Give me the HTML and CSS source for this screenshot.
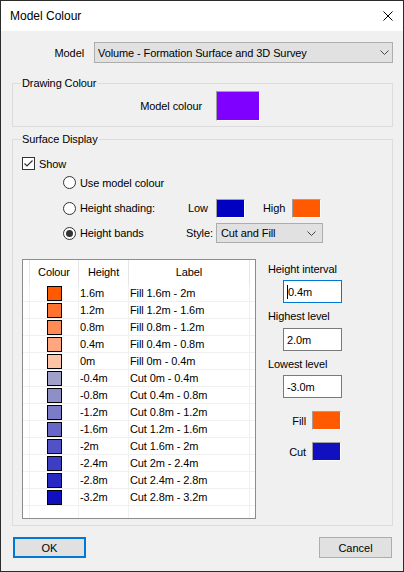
FILE: index.html
```html
<!DOCTYPE html>
<html lang="en">
<head>
<meta charset="utf-8">
<title>Model Colour</title>
<link rel="stylesheet" href="styles.css">
</head>
<body>
<div class="window">
  <div class="titlebar">
    <span class="title">Model Colour</span>
    <svg class="close" width="10" height="10" viewBox="0 0 10 10"><path d="M0.5 0.5L9.5 9.5M9.5 0.5L0.5 9.5" stroke="#000" stroke-width="1" fill="none"/></svg>
  </div>
  <div class="content">
    <div class="model-row">
      <span class="model-label">Model</span>
      <div class="combo combo-model">
        <span class="combo-text">Volume - Formation Surface and 3D Survey</span>
        <svg class="chevron" width="9" height="5" viewBox="0 0 9 5"><path d="M0.5 0.5L4.5 4.5L8.5 0.5" stroke="#444" stroke-width="1" fill="none"/></svg>
      </div>
    </div>

    <fieldset class="group group-drawing">
      <legend>Drawing Colour</legend>
      <div class="drawing-row">
        <span class="mc-label">Model colour</span>
        <span class="swatch swatch-model"></span>
      </div>
    </fieldset>

    <fieldset class="group group-surface">
      <legend>Surface Display</legend>
      <div class="show-row">
        <span class="checkbox"><svg width="11" height="11" viewBox="0 0 11 11"><path d="M1.5 5.5L4 8L9.5 2.5" stroke="#333" stroke-width="1.2" fill="none"/></svg></span>
        <span class="show-text">Show</span>
      </div>
      <div class="radio-row r1">
        <span class="radio"></span><span class="radio-text">Use model colour</span>
      </div>
      <div class="radio-row r2">
        <span class="radio"></span><span class="radio-text">Height shading:</span>
        <span class="pair-label low-label">Low</span><span class="swatch swatch-small sw-low"></span>
        <span class="high-label">High</span><span class="swatch swatch-small sw-high"></span>
      </div>
      <div class="radio-row r3">
        <span class="radio checked"></span><span class="radio-text">Height bands</span>
        <span class="pair-label">Style:</span>
        <div class="combo combo-style">
          <span class="combo-text">Cut and Fill</span>
          <svg class="chevron" width="9" height="5" viewBox="0 0 9 5"><path d="M0.5 0.5L4.5 4.5L8.5 0.5" stroke="#444" stroke-width="1" fill="none"/></svg>
        </div>
      </div>

      <div class="bands">
        <div class="listview">
          <div class="lv-row lv-head">
            <div class="cell c0"></div>
            <div class="cell c1">Colour</div>
            <div class="cell c2">Height</div>
            <div class="cell c3">Label</div>
          </div>
          <div class="lv-row"><div class="cell c0"></div><div class="cell c1"><span class="band b1"></span></div><div class="cell c2">1.6m</div><div class="cell c3">Fill 1.6m - 2m</div></div>
          <div class="lv-row"><div class="cell c0"></div><div class="cell c1"><span class="band b2"></span></div><div class="cell c2">1.2m</div><div class="cell c3">Fill 1.2m - 1.6m</div></div>
          <div class="lv-row"><div class="cell c0"></div><div class="cell c1"><span class="band b3"></span></div><div class="cell c2">0.8m</div><div class="cell c3">Fill 0.8m - 1.2m</div></div>
          <div class="lv-row"><div class="cell c0"></div><div class="cell c1"><span class="band b4"></span></div><div class="cell c2">0.4m</div><div class="cell c3">Fill 0.4m - 0.8m</div></div>
          <div class="lv-row"><div class="cell c0"></div><div class="cell c1"><span class="band b5"></span></div><div class="cell c2">0m</div><div class="cell c3">Fill 0m - 0.4m</div></div>
          <div class="lv-row"><div class="cell c0"></div><div class="cell c1"><span class="band b6"></span></div><div class="cell c2">-0.4m</div><div class="cell c3">Cut 0m - 0.4m</div></div>
          <div class="lv-row"><div class="cell c0"></div><div class="cell c1"><span class="band b7"></span></div><div class="cell c2">-0.8m</div><div class="cell c3">Cut 0.4m - 0.8m</div></div>
          <div class="lv-row"><div class="cell c0"></div><div class="cell c1"><span class="band b8"></span></div><div class="cell c2">-1.2m</div><div class="cell c3">Cut 0.8m - 1.2m</div></div>
          <div class="lv-row"><div class="cell c0"></div><div class="cell c1"><span class="band b9"></span></div><div class="cell c2">-1.6m</div><div class="cell c3">Cut 1.2m - 1.6m</div></div>
          <div class="lv-row"><div class="cell c0"></div><div class="cell c1"><span class="band b10"></span></div><div class="cell c2">-2m</div><div class="cell c3">Cut 1.6m - 2m</div></div>
          <div class="lv-row"><div class="cell c0"></div><div class="cell c1"><span class="band b11"></span></div><div class="cell c2">-2.4m</div><div class="cell c3">Cut 2m - 2.4m</div></div>
          <div class="lv-row"><div class="cell c0"></div><div class="cell c1"><span class="band b12"></span></div><div class="cell c2">-2.8m</div><div class="cell c3">Cut 2.4m - 2.8m</div></div>
          <div class="lv-row"><div class="cell c0"></div><div class="cell c1"><span class="band b13"></span></div><div class="cell c2">-3.2m</div><div class="cell c3">Cut 2.8m - 3.2m</div></div>
          <div class="lv-row lv-fill"><div class="cell c0"></div><div class="cell c1"></div><div class="cell c2"></div><div class="cell c3"></div></div>
        </div>

        <div class="side">
          <div class="side-label first">Height interval</div>
          <div class="textbox focused"><span class="caret"></span>0.4m</div>
          <div class="side-label">Highest level</div>
          <div class="textbox tb2">2.0m</div>
          <div class="side-label">Lowest level</div>
          <div class="textbox tb3">-3.0m</div>
          <div class="fc-row fill-row"><span class="fc-label">Fill</span><span class="swatch swatch-small sw-fill"></span></div>
          <div class="fc-row cut-row"><span class="fc-label">Cut</span><span class="swatch swatch-small sw-cut"></span></div>
        </div>
      </div>
    </fieldset>

    <div class="buttons">
      <button class="btn btn-ok">OK</button>
      <button class="btn">Cancel</button>
    </div>
  </div>
</div>
</body>
</html>
```

FILE: styles.css
```css
* { box-sizing: border-box; }
html, body { margin: 0; padding: 0; }
body {
  font-family: "Liberation Sans", Arial, sans-serif;
  font-size: 11px;
  letter-spacing: -0.1px;
  color: #000;
  background: #fff;
}

.window {
  width: 404px;
  height: 572px;
  border: 1px solid #2b2b2b;
  background: #f0f0f0;
  display: flex;
  flex-direction: column;
}

.titlebar {
  flex: none;
  height: 30px;
  background: #fff;
  display: flex;
  align-items: center;
  padding-left: 9px;
}
.title { font-size: 12px; letter-spacing: 0; }
.close { margin-left: auto; margin-right: 10px; }

.content {
  flex: 1;
  display: flex;
  flex-direction: column;
}

/* Model row */
.model-row {
  display: flex;
  align-items: center;
  height: 21px;
  margin-top: 11px;
}
.model-label {
  width: 83px;
  text-align: right;
  margin-right: 10px;
}
.combo {
  display: flex;
  align-items: center;
  background: #e1e1e1;
  border: 1px solid #adadad;
}
.combo-model { width: 299px; height: 21px; padding-left: 3px; }
.combo-model .chevron { margin-left: auto; margin-right: 3px; }
.combo-style { width: 107px; height: 20px; padding-left: 4px; }
.combo-style .chevron { margin-left: auto; margin-right: 6px; }

/* Group boxes */
.group {
  margin: 0 0 0 11px;
  width: 381px;
  padding: 0;
  border: 1px solid #dcdcdc;
  min-width: 0;
}
.group legend {
  padding: 0 1px;
  margin-left: 8px;
  line-height: 13px;
  font-size: 11px;
}
.group-drawing { margin-top: 14px; }
.group-surface { margin-top: 6px; height: 393px; }

.drawing-row {
  display: flex;
  align-items: center;
  padding: 1px 0 5px;
}
.mc-label {
  width: 189px;
  text-align: right;
  margin-right: 14px;
}

.swatch {
  display: block;
  border-top: 1px solid #a0a0a0;
  border-left: 1px solid #a0a0a0;
  border-right: 1px solid #fff;
  border-bottom: 1px solid #fff;
  flex: none;
}
.swatch-model { width: 44px; height: 30px; background: #8000ff; }
.swatch-small { width: 29px; height: 19px; }
.sw-low { background: #0000c0; }
.sw-high { background: #ff5a00; }
.sw-fill { background: #ff5a00; }
.sw-cut { background: #1010c0; }

/* Show / radio rows */
.show-row {
  display: flex;
  align-items: center;
  height: 19px;
  margin-top: 8px;
  padding-left: 9px;
}
.checkbox {
  width: 13px;
  height: 13px;
  border: 1px solid #333;
  background: #fff;
  display: flex;
  align-items: center;
  justify-content: center;
}
.show-text { margin-left: 4px; }

.radio-row {
  display: flex;
  align-items: center;
  padding-left: 50px;
}
.r1 { height: 19px; }
.r2 { height: 20px; margin-top: 6px; }
.r3 { height: 20px; margin-top: 5px; }

.radio {
  width: 13px;
  height: 13px;
  border: 1px solid #333;
  border-radius: 50%;
  background: #fff;
  display: flex;
  align-items: center;
  justify-content: center;
  flex: none;
}
.radio.checked::after {
  content: "";
  width: 7px;
  height: 7px;
  border-radius: 50%;
  background: #333;
}
.radio-text { margin-left: 4px; width: 106px; }
.pair-label { width: 30px; }
.low-label { padding-left: 2px; }
.high-label { margin-left: 18px; width: 29px; }

/* Bands area */
.bands {
  display: flex;
  margin-top: 16px;
  padding-left: 9px;
}

.listview {
  flex: none;
  width: 234px;
  height: 260px;
  border: 1px solid #8c8c8c;
  background: #fff;
  display: flex;
  flex-direction: column;
}
.lv-row {
  flex: none;
  display: flex;
  height: 17px;
  border-bottom: 1px solid #f0f0f0;
  line-height: 16px;
  white-space: nowrap;
}
.lv-head {
  height: 25px;
  border-bottom: none;
  line-height: 25px;
}
.lv-fill { flex: 1; border-bottom: none; }
.cell {
  flex: none;
  border-right: 1px solid #f0f0f0;
}
.lv-head .cell { border-right-color: #e5e5e5; text-align: center; }
.c0 { width: 7px; }
.c1 { width: 49px; }
.c2 { width: 50px; padding-left: 1px; }
.c3 { width: 121px; padding-left: 1px; }
.lv-head .c2, .lv-head .c3 { padding-left: 0; }
.lv-row:not(.lv-head) .c1 { padding-left: 17px; padding-top: 1px; }

.band {
  display: block;
  width: 15px;
  height: 15px;
  border: 1px solid #000;
}
.b1 { background: #ff5a00; }
.b2 { background: #ff7331; }
.b3 { background: #ff8c55; }
.b4 { background: #ffa67e; }
.b5 { background: #ffc4a6; }
.b6 { background: #a0a0c8; }
.b7 { background: #8f8fc8; }
.b8 { background: #7b7bc8; }
.b9 { background: #6767c8; }
.b10 { background: #5252c6; }
.b11 { background: #3d3dc5; }
.b12 { background: #2828c2; }
.b13 { background: #1010c0; }

/* Side panel */
.side {
  margin-left: 12px;
  display: flex;
  flex-direction: column;
  align-items: flex-start;
}
.side-label { line-height: 13px; margin-top: 7px; }
.side-label.first { margin-top: 4px; }
.textbox {
  width: 59px;
  height: 23px;
  margin-left: 15px;
  margin-top: 4px;
  border: 1px solid #7a7a7a;
  background: #fff;
  padding-left: 3px;
  display: flex;
  align-items: center;
}
.textbox.focused { border-color: #0078d7; }
.tb2 { margin-top: 5px; }
.caret {
  display: block;
  width: 1px;
  height: 14px;
  background: #000;
}
.fc-row {
  display: flex;
  align-items: center;
}
.fill-row { margin-top: 13px; }
.cut-row { margin-top: 12px; }
.fc-label {
  width: 38px;
  text-align: right;
  margin-right: 6px;
}

/* Buttons */
.buttons {
  display: flex;
  justify-content: space-between;
  margin-top: 11px;
  padding: 0 11px 0 12px;
}
.btn {
  width: 73px;
  height: 21px;
  padding: 0;
  background: #e1e1e1;
  border: 1px solid #adadad;
  font: inherit;
  color: #000;
}
.btn-ok { border: 2px solid #0078d7; }
```
